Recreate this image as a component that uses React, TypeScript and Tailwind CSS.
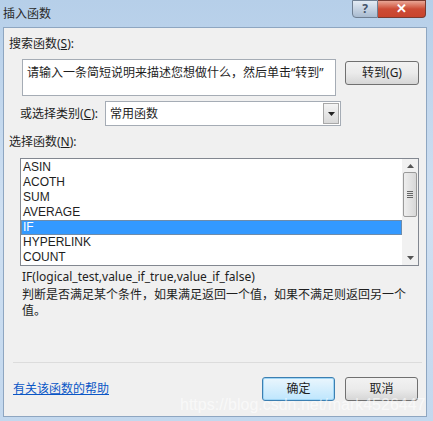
import React from "react";

const font = { fontFamily: '"Noto Sans", "Noto Sans CJK SC", sans-serif' };
const listFont = { fontFamily: '"Liberation Sans", "Noto Sans CJK SC", sans-serif' };

const items = ["ASIN", "ACOTH", "SUM", "AVERAGE", "IF", "HYPERLINK", "COUNT"];

export default function App() {
  return (
    <div
      className="relative w-[433px] h-[421px] overflow-hidden bg-gradient-to-b from-[#b6cfe9] via-[#cfe0f2] to-[#c3d8ee] text-[12px] text-[#1e1e1e]"
      style={font}
    >
      {/* title bar */}
      <div className="flex h-[27px] items-start justify-between pl-[3px] pr-[7px]">
        <span className="mt-[5px] text-[12px] text-[#2a2a2a]">插入函数</span>
        <div className="flex h-[18px]">
          <div className="flex w-[26px] items-center justify-center rounded-bl-[4px] border border-[#6f7f92] bg-gradient-to-b from-[#e3ebf4] to-[#a9bbd0] text-[12px] font-bold text-[#44546a]">
            ?
          </div>
          <div className="flex w-[48px] items-center justify-center rounded-br-[4px] border border-l-0 border-[#7a3a30] bg-gradient-to-b from-[#e8a595] via-[#cc4b35] to-[#c8442d] text-[13px] font-bold text-white">
            ✕
          </div>
        </div>
      </div>

      {/* client area */}
      <div className="mx-[3px] h-[390px] w-[424px] border border-[#8ea6c1] bg-[#f0f0f0] px-[5px]">
        <div className="mt-[8px] h-[16px] leading-[16px]">
          搜索函数(<span className="underline">S</span>):
        </div>
        <div className="mt-[7px] flex items-start">
          <div className="ml-[13px] h-[37px] w-[314px] border border-[#a5acb5] bg-white px-[4px] pt-[5px] leading-[15px]">
            请输入一条简短说明来描述您想做什么，然后单击“转到”
          </div>
          <div className="ml-[9px] mt-[2px] flex h-[24px] w-[74px] items-center justify-center rounded-[3px] border border-[#707070] bg-gradient-to-b from-[#f2f2f2] via-[#ebebeb] to-[#d6d6d6]">
            转到(G)
          </div>
        </div>
        <div className="mt-[5px] flex items-center">
          <span className="ml-[11px] w-[85px]">
            或选择类别(<span className="underline">C</span>):
          </span>
          <div className="flex h-[25px] w-[236px] items-center border border-[#a5acb5] bg-white">
            <span className="flex-1 pl-[4px]">常用函数</span>
            <div className="mr-[1px] flex h-[21px] w-[16px] items-center justify-center border border-[#a8a8a8] bg-gradient-to-b from-[#f4f4f4] to-[#d9d9d9]">
              <svg width="7" height="4" viewBox="0 0 7 4">
                <path d="M0 0h7L3.5 4z" fill="#222" />
              </svg>
            </div>
          </div>
        </div>
        <div className="mt-[8px] h-[16px] leading-[16px]">
          选择函数(<span className="underline">N</span>):
        </div>
        <div className="ml-[11px] mt-[8px] flex h-[108px] w-[399px] border border-[#828790] bg-white">
          <div className="flex-1 pt-[1px]" style={listFont}>
            {items.map((it) => (
              <div
                key={it}
                className={
                  it === "IF"
                    ? "h-[15px] border border-[#6e8cab] bg-[#3399ff] pl-[1px] leading-[13px] text-white"
                    : "h-[15px] pl-[2px] leading-[15px]"
                }
              >
                {it}
              </div>
            ))}
          </div>
          <div className="flex w-[16px] flex-col items-center bg-[#f1f1f1]">
            <svg className="mt-[5px]" width="7" height="4" viewBox="0 0 7 4">
              <path d="M3.5 0L7 4H0z" fill="#555" />
            </svg>
            <div className="mt-[4px] flex h-[45px] w-[14px] flex-col items-center justify-center gap-[1px] rounded-[2px] border border-[#9a9a9a] bg-gradient-to-r from-[#eeeeee] to-[#d8d8d8]">
              <div className="h-px w-[6px] bg-[#666]" />
              <div className="h-px w-[6px] bg-[#666]" />
              <div className="h-px w-[6px] bg-[#666]" />
              <div className="h-px w-[6px] bg-[#666]" />
            </div>
            <div className="flex-1" />
            <svg className="mb-[5px]" width="7" height="4" viewBox="0 0 7 4">
              <path d="M0 0h7L3.5 4z" fill="#555" />
            </svg>
          </div>
        </div>
        <div className="ml-[13px] mt-[2px] leading-[18px]">IF(logical_test,value_if_true,value_if_false)</div>
        <div className="ml-[13px] mt-[1px] w-[386px] leading-[16px]">
          判断是否满足某个条件，如果满足返回一个值，如果不满足则返回另一个值。
        </div>
        <div className="ml-[4px] mt-[43px] h-px w-[409px] bg-[#dcdcdc]" />
        <div className="mt-[14px] flex items-center">
          <span className="ml-[4px] flex-1 text-[#0b57c6] underline">有关该函数的帮助</span>
          <div className="flex h-[24px] w-[73px] items-center justify-center rounded-[3px] border border-[#3c7fb1] bg-gradient-to-b from-[#eaf6fd] to-[#bee6fd] shadow-[inset_0_0_0_1px_#9fd5f5]">
            确定
          </div>
          <div className="ml-[10px] mr-[3px] flex h-[24px] w-[73px] items-center justify-center rounded-[3px] border border-[#707070] bg-gradient-to-b from-[#f2f2f2] via-[#ebebeb] to-[#d6d6d6]">
            取消
          </div>
        </div>
      </div>

      {/* watermark */}
      <div
        className="pointer-events-none absolute left-[180px] top-[393px] whitespace-nowrap text-[16px] text-white/60"
        style={{ fontFamily: '"Liberation Sans", sans-serif' }}
      >
        https://blog.csdn.net/mark4526447
      </div>
    </div>
  );
}
